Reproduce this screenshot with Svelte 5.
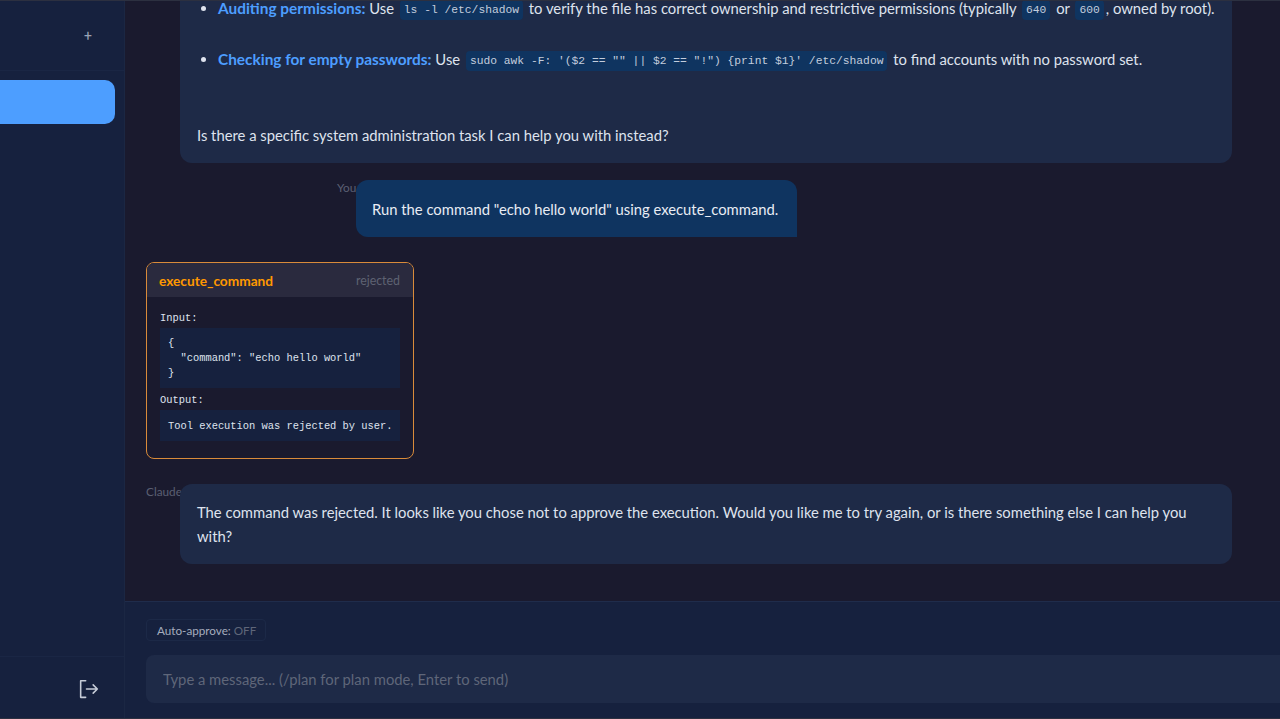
<script>
  let draft = $state('');
</script>

<div class="app">
  <aside class="sidebar">
    <div class="side-head">
      <button class="new-chat" aria-label="New chat">+</button>
    </div>
    <div class="side-list">
      <div class="session active"></div>
    </div>
    <div class="side-foot">
      <button class="logout" aria-label="Log out">
        <svg viewBox="0 0 24 24" width="20" height="20" fill="none" stroke="currentColor" stroke-width="1.9" stroke-linecap="round" stroke-linejoin="round">
          <path d="M8 2H2v20h6"/>
          <path d="M9 12h13M17 7l5 5-5 5"/>
        </svg>
      </button>
    </div>
  </aside>

  <main class="chat">
    <div class="messages">
      <div class="row">
        <div class="label"></div>
        <div class="bubble">
          <ul>
            <li><strong>Auditing permissions:</strong> Use <code>ls -l /etc/shadow</code> to verify the file has correct ownership and restrictive permissions (typically <code>640</code> or <code>600</code>, owned by root).</li>
            <li><strong>Checking for empty passwords:</strong> Use <code>sudo awk -F: '($2 == "" || $2 == "!") {'{'}print $1{'}'}' /etc/shadow</code> to find accounts with no password set.</li>
          </ul>
          <p>Is there a specific system administration task I can help you with instead?</p>
        </div>
      </div>

      <div class="row user">
        <div class="label">You</div>
        <div class="bubble user-bubble">Run the command "echo hello world" using execute_command.</div>
      </div>

      <div class="tool-card">
        <div class="tool-head">
          <span class="tool-name">execute_command</span>
          <span class="tool-status">rejected</span>
        </div>
        <div class="tool-body">
          <div class="tool-label">Input:</div>
          <pre class="tool-pre">{`{
  "command": "echo hello world"
}`}</pre>
          <div class="tool-label">Output:</div>
          <pre class="tool-pre">Tool execution was rejected by user.</pre>
        </div>
      </div>

      <div class="row">
        <div class="label">Claude</div>
        <div class="bubble">The command was rejected. It looks like you chose not to approve the execution. Would you like me to try again, or is there something else I can help you with?</div>
      </div>
    </div>

    <div class="composer">
      <div class="auto-approve">Auto-approve: <span>OFF</span></div>
      <input class="input" placeholder="Type a message... (/plan for plan mode, Enter to send)" bind:value={draft} />
    </div>
  </main>
</div>

<style>
  :global(body) {
    margin: 0;
    background: #1a1a2e;
    font-family: Lato, Roboto, sans-serif;
    overflow: hidden;
  }

  .app {
    display: flex;
    height: 719px;
    box-sizing: border-box;
    border-top: 1px solid #2c3040;
    border-bottom: 1px solid #2c3040;
    color: #dfe3ee;
  }

  .sidebar {
    width: 124px;
    flex: none;
    display: flex;
    flex-direction: column;
    background: #16213e;
    border-right: 1px solid #1b2743;
  }

  .side-head {
    height: 69px;
    display: flex;
    justify-content: flex-end;
    align-items: center;
    padding-right: 32px;
    border-bottom: 1px solid #1a2644;
  }

  .new-chat {
    background: none;
    border: none;
    padding: 0;
    color: #9aa3b5;
    font: 14px Roboto, sans-serif;
  }

  .side-list {
    flex: 1;
    padding: 9px 9px 0 0;
  }

  .session {
    height: 44px;
    border-radius: 0 10px 10px 0;
  }

  .session.active { background: #4d9eff; }

  .side-foot {
    height: 62px;
    display: flex;
    justify-content: flex-end;
    align-items: center;
    padding: 2px 25px 0 0;
    box-sizing: border-box;
    border-top: 1px solid #1a2644;
  }

  .logout {
    display: flex;
    background: none;
    border: none;
    padding: 0;
    color: #c6ccd8;
  }

  .chat {
    flex: 1;
    min-width: 0;
    display: flex;
    flex-direction: column;
  }

  .messages {
    flex: 1;
    min-height: 0;
    overflow: hidden;
    display: flex;
    flex-direction: column;
    justify-content: flex-end;
    padding: 0 48px 37px 21px;
  }

  .row {
    display: flex;
    flex: none;
    align-items: flex-start;
  }

  .row.user { margin: 17px 0 25px 191px; }

  .label {
    width: 34px;
    flex: none;
    font-size: 11.8px;
    line-height: 16px;
    color: #5a5f72;
    white-space: nowrap;
  }

  .row.user .label { width: 19px; }

  .bubble {
    flex: 1;
    background: #1e2a47;
    border-radius: 12px;
    padding: 16px 17px;
    font-size: 14.8px;
    line-height: 24px;
    color: #dfe3ee;
    min-width: 0;
  }

  .user-bubble {
    flex: none;
    background: #0f3460;
    border-radius: 12px 12px 0 12px;
    padding: 17px 19px 16px 16px;
    color: #e8ecf4;
  }

  ul {
    margin: 0 0 52px;
    padding-left: 21px;
  }

  li { margin-bottom: 27px; white-space: nowrap; }
  li:last-child { margin-bottom: 0; }

  p { margin: 0; }

  strong {
    color: #4d9eff;
    font-size: 15.4px;
    font-weight: 700;
  }

  code {
    font-family: "Liberation Mono", monospace;
    font-size: 11.3px;
    line-height: 1;
    vertical-align: 1px;
    background: #0f3460;
    color: #c3cddd;
    padding: 4px;
    margin: 0 2px;
    border-radius: 4px;
  }

  .tool-card {
    flex: none;
    width: 268px;
    box-sizing: border-box;
    margin-bottom: 25px;
    border: 1px solid #d98b3a;
    border-radius: 8px;
    overflow: hidden;
    background: #1a1a2e;
  }

  .tool-head {
    height: 34px;
    display: flex;
    justify-content: space-between;
    align-items: center;
    padding: 0 13px 0 12px;
    background: #2a2a3e;
  }

  .tool-name {
    color: #ff9800;
    font-size: 13.7px;
    font-weight: 700;
  }

  .tool-status {
    color: #5e6272;
    font-size: 12.4px;
  }

  .tool-body {
    padding: 11px 13px 17px;
    font-family: "Liberation Mono", monospace;
    font-size: 10.4px;
    color: #dfe3ee;
  }

  .tool-label {
    line-height: 20px;
  }

  .tool-pre {
    margin: 0 0 2px;
    padding: 7.5px 8px;
    background: #16213e;
    font: inherit;
    line-height: 15px;
    white-space: pre;
    overflow: hidden;
  }

  .tool-pre:last-child {
    margin-bottom: 0;
    padding: 9px 8px 7px;
  }

  .composer {
    flex: none;
    height: 117px;
    box-sizing: border-box;
    padding: 17px 0 15px 21px;
    background: #16213e;
    border-top: 1px solid #1f2c4b;
    display: flex;
    flex-direction: column;
    align-items: flex-start;
    gap: 14px;
  }

  .auto-approve {
    height: 22px;
    box-sizing: border-box;
    padding: 0 9px 0 10px;
    display: flex;
    align-items: center;
    gap: 3px;
    font-size: 11.7px;
    color: #a5acbd;
    border: 1px solid #1c2947;
    border-radius: 4px;
  }

  .auto-approve span { color: #5f6679; }

  .input {
    width: 100%;
    height: 48px;
    box-sizing: border-box;
    padding: 0 17px;
    background: #1e2a47;
    border: none;
    border-radius: 8px 0 0 8px;
    outline: none;
    font: 14.8px Lato, Roboto, sans-serif;
    color: #dfe3ee;
  }

  .input::placeholder { color: #5f6679; }
</style>
